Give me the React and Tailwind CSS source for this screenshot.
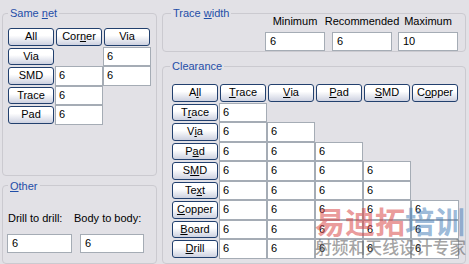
import React from 'react';

const Label = ({ text, u }) =>
  u === undefined || u < 0 ? (
    text
  ) : (
    <>
      {text.slice(0, u)}
      <u className="underline-offset-[1px]">{text[u]}</u>
      {text.slice(u + 1)}
    </>
  );

const Btn = ({ text, u }) => (
  <div className="mx-[1px] my-[1px] flex items-center justify-center rounded-[3px] border border-[#22406e] bg-linear-to-b from-white from-40% to-[#cdd1e0] leading-none text-black">
    <Label text={text} u={u} />
  </div>
);

const Cell = ({ value }) => (
  <div className="flex items-center border border-[#a5acb5] bg-white pl-[3px] leading-none">
    {value}
  </div>
);

const Group = ({ title, u, offset, className, children }) => (
  <fieldset className={`rounded-[4px] border border-[#cbcad0] p-0 ${className}`}>
    <legend className={`px-[2px] leading-[14px] text-[#1f4ea8] ${offset}`}>
      <Label text={title} u={u} />
    </legend>
    {children}
  </fieldset>
);

const sameNet = [
  [{ b: 'Via' }, null, '6'],
  [{ b: 'SMD' }, '6', '6'],
  [{ b: 'Trace' }, '6', null],
  [{ b: 'Pad' }, '6', null],
];

const clearanceHead = [
  ['All', 1],
  ['Trace', 0],
  ['Via', 0],
  ['Pad', 0],
  ['SMD', 0],
  ['Copper', 1],
];

const clearanceRows = [
  ['Trace', 1, 1],
  ['Via', 1, 2],
  ['Pad', 1, 3],
  ['SMD', 1, 4],
  ['Text', 2, 4],
  ['Copper', 0, 5],
  ['Board', 0, 5],
  ['Drill', 0, 5],
];

const widths = [
  ['Minimum', '6', ''],
  ['Recommended', '6', 'ml-[7px]'],
  ['Maximum', '10', 'ml-[6px]'],
];

export default function App() {
  return (
    <div className="relative flex h-[264px] w-[469px] gap-[5px] overflow-hidden bg-[#e2e1e6] pl-[2px] pt-[6px] font-['Liberation_Sans',sans-serif] text-[11px] text-black">
      {/* left column */}
      <div className="flex w-[155px] flex-col">
        <Group title="Same net" u={5} offset="ml-[5px]" className="h-[179px]">
          <div className="grid grid-cols-[repeat(3,48px)] auto-rows-[19.5px] pl-[4px] pt-[7px]">
            <Btn text="All" />
            <Btn text="Corner" u={3} />
            <Btn text="Via" />
            {sameNet.map((row, i) =>
              row.map((c, j) =>
                c && c.b ? (
                  <Btn key={`${i}-${j}`} text={c.b} />
                ) : c ? (
                  <Cell key={`${i}-${j}`} value={c} />
                ) : (
                  <div key={`${i}-${j}`} />
                )
              )
            )}
          </div>
        </Group>

        <Group title="Other" u={0} offset="ml-[5px]" className="mt-[3px] h-[90px]">
          <div className="flex pl-[5px] pt-[19px] leading-[13px]">
            <span className="w-[66px]">Drill to drill:</span>
            <span>Body to body:</span>
          </div>
          <div className="mt-[9px] flex pl-[4px]">
            <div className="flex h-[19px] w-[65px] items-center border border-[#a5acb5] bg-white pl-[4px] leading-none">6</div>
            <div className="ml-[8px] flex h-[19px] w-[64px] items-center border border-[#a5acb5] bg-white pl-[4px] leading-none">6</div>
          </div>
        </Group>
      </div>

      {/* right column */}
      <div className="flex w-[304px] flex-col">
        <Group title="Trace width" u={6} offset="ml-[8px]" className="h-[47px]">
          <div className="-mt-[5px] flex justify-end pr-[7px]">
            {widths.map(([name, val, cls]) => (
              <div key={name} className={`flex w-[60px] flex-col items-center ${cls}`}>
                <span className="whitespace-nowrap leading-[13px]">{name}</span>
                <div className="mt-[4px] flex h-[19px] w-[60px] items-center border border-[#a5acb5] bg-white pl-[4px] leading-none">
                  {val}
                </div>
              </div>
            ))}
          </div>
        </Group>

        <Group title="Clearance" offset="ml-[7px]" className="mt-[7px] h-[220px]">
          <div className="grid grid-cols-[repeat(6,48px)] auto-rows-[19.5px] pl-[8px] pt-[10px]">
            {clearanceHead.map(([t, u]) => (
              <Btn key={`h-${t}`} text={t} u={u} />
            ))}
            {clearanceRows.map(([name, u, n]) =>
              [0, 1, 2, 3, 4, 5].map((j) =>
                j === 0 ? (
                  <Btn key={`${name}-${j}`} text={name} u={u} />
                ) : j <= n ? (
                  <Cell key={`${name}-${j}`} value="6" />
                ) : (
                  <div key={`${name}-${j}`} />
                )
              )
            )}
          </div>
        </Group>
      </div>

      {/* watermark */}
      <div className="pointer-events-none absolute left-[315px] top-[202px] flex flex-col font-['Noto_Sans_CJK_SC',sans-serif] font-bold">
        <div className="flex text-[30px] leading-[36px]">
          <span className="text-[#d94545]/55">易迪拓</span>
          <span className="text-[#4a7fb8]/55">培训</span>
        </div>
        <div className="-mt-[1px] text-[16.8px] leading-[20px] font-medium text-[#666]/60">射频和天线设计专家</div>
      </div>
    </div>
  );
}
